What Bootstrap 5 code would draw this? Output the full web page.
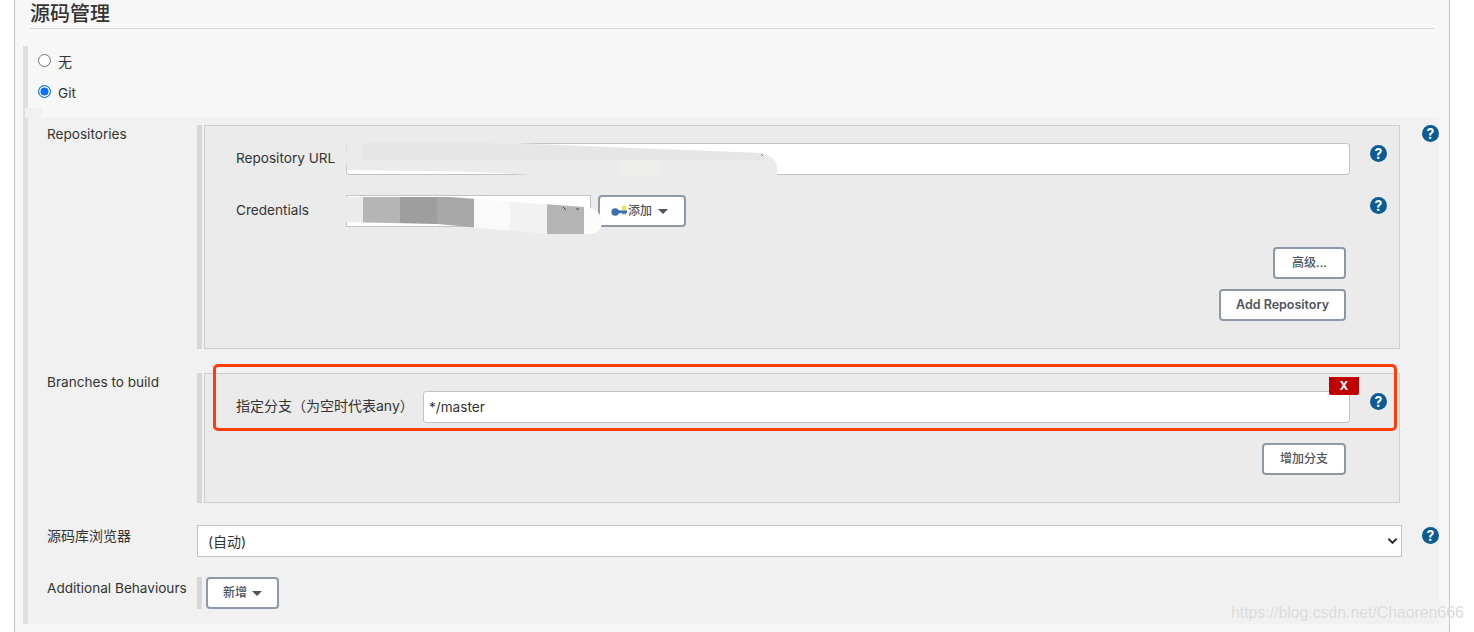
<!DOCTYPE html>
<html lang="zh-CN">

<head>
    <meta charset="UTF-8">
    <meta name="viewport" content="width=device-width, initial-scale=1.0">
    <title>源码管理</title>
    <link href="https://cdn.jsdelivr.net/npm/bootstrap@5.3.0/dist/css/bootstrap.min.css" rel="stylesheet">
    <style>
        html, body {
            height: 632px;
            overflow: hidden;
        }

        body {
            background-color: #ffffff;
            color: #333333;
            font-family: Inter, "Noto Sans CJK SC", sans-serif;
            font-size: 13.6px;
            position: relative;
        }

        .cjk-text {
            font-size: 14px;
        }

        .cfg-panel {
            margin-left: 14px;
            width: 1436px;
            height: 632px;
            background-color: #f7f7f7;
            border-left: 1px solid #c6c6c6;
            border-right: 1px solid #c6c6c6;
        }

        .cfg-title {
            margin: 0 15px;
            height: 29px;
            font-size: 20px;
            font-weight: 500;
            line-height: 28px;
            border-bottom: 1px solid #d6d6d6;
        }

        .scm-wrap {
            margin: 17px 0 0 8px;
            width: 1416px;
            border-left: 5px solid #dfdfdf;
        }

        .scm-choice {
            height: 31px;
            padding-left: 10px;
            gap: 7px;
        }

        .scm-git {
            height: 32px;
        }

        .scm-choice .form-check-input {
            width: 13px;
            height: 13px;
            margin: 0 0 3px 0;
            border-color: #767676;
        }

        .scm-choice .form-check-input:checked {
            background-color: #0b6ffb;
            background-image: none;
            border-color: #0b6ffb;
            box-shadow: inset 0 0 0 1.5px #ffffff;
        }

        .git-area {
            position: relative;
            margin-top: 9px;
            padding: 7px 0 15px 19px;
            background-color: #f1f1f1;
        }

        .git-area::before {
            content: "";
            position: absolute;
            left: -3px;
            top: -10px;
            width: 17px;
            height: 10px;
            background-color: #f1f1f1;
        }

        .field-name {
            width: 150px;
            flex-shrink: 0;
            padding-top: 1px;
        }

        .field-raised {
            padding-top: 0;
            margin-top: -1px;
        }

        .side-bar {
            width: 5px;
            flex-shrink: 0;
            margin-right: 2px;
            background-color: #d6d6d6;
        }

        .sub-box {
            width: 1196px;
            flex-shrink: 0;
            background-color: #ebebeb;
            border: 1px solid #cecece;
            padding: 17px 12px 0 31px;
            position: relative;
        }

        .repo-box {
            height: 224px;
        }

        .branch-box {
            height: 130px;
        }

        .box-line {
            height: 32px;
        }

        .box-name {
            flex-shrink: 0;
            width: 110px;
            padding-bottom: 2px;
        }

        .branch-name {
            width: 187px;
            padding-bottom: 4px;
        }

        .browser-name {
            padding-top: 0;
        }

        .jk-input {
            height: 32px;
            padding: 2px 5px;
            font-size: 13.6px;
            color: #333333;
            border: 1px solid #c3c3c3;
            border-radius: 3px;
        }

        .jk-pick {
            height: 32px;
            font-size: 14px;
            color: #333333;
            border: 1px solid #c3c3c3;
            border-radius: 0;
            padding: 2px 10px;
            background-image: url("data:image/svg+xml,%3csvg xmlns='http://www.w3.org/2000/svg' viewBox='0 0 12 8'%3e%3cpath fill='none' stroke='%23333333' stroke-width='2.2' d='M1.5 1.5 6 6l4.5-4.5'/%3e%3c/svg%3e");
            background-position: right 3px center;
            background-size: 11px 8px;
        }

        .cred-pick {
            width: 245px;
        }

        .browser-pick {
            width: 1205px;
        }

        .jk-btn {
            height: 32px;
            padding: 0 15px;
            background-color: #ffffff;
            color: #4d545d;
            border: 2px solid #8d99a6;
            border-radius: 4px;
            font-size: 12.5px;
            font-weight: 600;
            line-height: 28px;
            white-space: nowrap;
        }

        .btn-cjk {
            font-size: 12px;
            font-weight: 500;
        }

        .jk-btn.dropdown-toggle::after {
            margin-left: 5px;
            vertical-align: 1px;
            border-top-width: 5px;
            border-left-width: 5px;
            border-right-width: 5px;
        }

        .help-dot {
            width: 17px;
            height: 17px;
            flex-shrink: 0;
            border-radius: 50%;
            background-color: #0b5c94;
            color: #ffffff;
            font-size: 14px;
            font-weight: 700;
            line-height: 17px;
            text-align: center;
        }

        .help-line {
            margin-left: 20px;
            margin-top: 2px;
            align-self: flex-start;
        }

        .help-end {
            margin-left: auto;
            margin-top: 2px;
            align-self: flex-start;
        }

        .help-outer {
            margin-left: 22px;
        }

        .help-browser {
            margin-left: 20px;
            margin-top: 2px;
        }

        .remove-btn {
            position: absolute;
            top: 3px;
            right: 40px;
            width: 30px;
            height: 18px;
            background-color: #c00000;
            color: #ffffff;
            border-radius: 0 0 2px 2px;
            font-size: 12px;
            font-weight: 700;
            line-height: 18px;
            text-align: center;
        }

        .mark-frame {
            position: absolute;
            left: 213px;
            top: 364px;
            width: 1184px;
            height: 67px;
            border: 3px solid #ff3d0c;
            border-radius: 5px;
            pointer-events: none;
        }

        .smear {
            position: absolute;
            left: 0;
            top: 0;
        }

        .watermark {
            position: absolute;
            left: 1231px;
            top: 603px;
            font-family: "Liberation Sans", sans-serif;
            font-size: 15.8px;
            line-height: 20px;
            color: #d9d9d9;
            text-shadow: 0 0 1px #ffffff;
            white-space: nowrap;
        }

        .row-gap-box { margin-top: 20px; }
        .add-key { margin-left: 7px; width: 88px; padding: 0 0 0 11px; gap: 1px; }
        .btn-side { padding-right: 41px; }
        .btn-first { margin-top: 20px; }
        .btn-next { margin-top: 10px; }
        .adv-btn { width: 73px; }
        .more-btn { width: 84px; padding: 0; }
        .new-btn { width: 73px; padding: 0; }
        .branch-row { margin-top: 24px; }
        .browser-row { margin-top: 22px; height: 32px; }
        .behaviours-row { margin-top: 20px; height: 32px; }
        .new-slot { margin-left: 2px; }
    </style>
</head>

<body>
    <div class="cfg-panel">
        <div class="cfg-title">源码管理</div>

        <div class="scm-wrap">
            <label class="scm-choice d-flex align-items-center">
                <input class="form-check-input" type="radio" name="scm">
                <span class="cjk-text">无</span>
            </label>
            <label class="scm-choice scm-git d-flex align-items-center">
                <input class="form-check-input" type="radio" name="scm" checked>
                <span>Git</span>
            </label>

            <div class="git-area">
                <div class="d-flex">
                    <div class="field-name field-raised">Repositories</div>
                    <div class="side-bar"></div>
                    <div class="sub-box repo-box">
                        <div class="box-line d-flex align-items-center">
                            <div class="box-name">Repository URL</div>
                            <input type="text" class="form-control jk-input flex-grow-1">
                            <div class="help-dot help-line">?</div>
                        </div>
                        <div class="box-line d-flex align-items-center row-gap-box">
                            <div class="box-name">Credentials</div>
                            <select class="form-select jk-pick cred-pick"><option></option></select>
                            <button class="btn jk-btn btn-cjk dropdown-toggle add-key d-flex align-items-center" type="button">
                                <svg width="16" height="13" viewBox="0 0 16 13" aria-hidden="true">
                                    <circle cx="13" cy="3" r="2.4" fill="#f5de4a"/>
                                    <circle cx="4.2" cy="7" r="3.8" fill="#3f6eb0"/>
                                    <rect x="6" y="5.4" width="10" height="2.8" fill="#3f6eb0"/>
                                    <rect x="11" y="8" width="4" height="1.4" fill="#7a98c6"/>
                                </svg>
                                <span class="key-label">添加</span>
                            </button>
                            <div class="help-dot help-end">?</div>
                        </div>
                        <div class="d-flex justify-content-end btn-side btn-first">
                            <button class="btn jk-btn btn-cjk adv-btn" type="button">高级...</button>
                        </div>
                        <div class="d-flex justify-content-end btn-side btn-next">
                            <button class="btn jk-btn" type="button">Add Repository</button>
                        </div>
                    </div>
                    <div class="help-dot help-outer">?</div>
                </div>

                <div class="d-flex branch-row">
                    <div class="field-name field-raised">Branches to build</div>
                    <div class="side-bar"></div>
                    <div class="sub-box branch-box">
                        <div class="remove-btn">X</div>
                        <div class="box-line d-flex align-items-center">
                            <div class="box-name branch-name cjk-text">指定分支（为空时代表any）</div>
                            <input type="text" class="form-control jk-input flex-grow-1" value="*/master">
                            <div class="help-dot help-line">?</div>
                        </div>
                        <div class="d-flex justify-content-end btn-side btn-first">
                            <button class="btn jk-btn btn-cjk more-btn" type="button">增加分支</button>
                        </div>
                    </div>
                </div>

                <div class="d-flex browser-row">
                    <div class="field-name browser-name cjk-text">源码库浏览器</div>
                    <select class="form-select jk-pick browser-pick"><option>(自动)</option></select>
                    <div class="help-dot help-browser">?</div>
                </div>

                <div class="d-flex behaviours-row">
                    <div class="field-name">Additional Behaviours</div>
                    <div class="side-bar"></div>
                    <div class="new-slot">
                        <button class="btn jk-btn btn-cjk new-btn dropdown-toggle" type="button">新增</button>
                    </div>
                </div>
            </div>
        </div>
    </div>

    <div class="mark-frame"></div>

    <svg class="smear" width="1474" height="632" aria-hidden="true">
        <defs>
            <clipPath id="smearTwo">
                <path d="M345 197 H450 L584 207 Q600 209 602 220 Q602 234 590 234 H547 L437 224 L345 222 Q334 222 334 210 Q334 197 345 197 Z"/>
            </clipPath>
        </defs>
        <path d="M347 142 H490 L760 153 Q777 156 777 168 V175 H530 L480 172 L347 170 Q345 156 347 142 Z" fill="#ebebeb"/>
        <path d="M363 143 H490 L760 153 L768 160 H363 Z" fill="#e6e6e6"/>
        <rect x="620" y="160" width="40" height="15" fill="#eeeeea"/>
        <path d="M761 154 L763 156" stroke="#777777" fill="none"/>
        <g clip-path="url(#smearTwo)">
            <rect x="334" y="197" width="29" height="37" fill="#ebebeb"/>
            <rect x="363" y="197" width="37" height="37" fill="#b5b5b5"/>
            <rect x="400" y="197" width="37" height="37" fill="#9e9e9e"/>
            <rect x="437" y="197" width="37" height="37" fill="#a8a8a8"/>
            <rect x="474" y="197" width="36" height="37" fill="#fafafa"/>
            <rect x="510" y="197" width="37" height="37" fill="#f2f2f2"/>
            <rect x="547" y="197" width="37" height="37" fill="#b5b5b5"/>
            <rect x="584" y="197" width="18" height="37" fill="#fcfcfa"/>
        </g>
        <path d="M563 207 L566 210 M576 209 L579 209" stroke="#444444" fill="none"/>
    </svg>

    <div class="watermark">https://blog.csdn.net/Chaoren666</div>

    <script src="https://cdn.jsdelivr.net/npm/bootstrap@5.3.0/dist/js/bootstrap.bundle.min.js"></script>
</body>

</html>
